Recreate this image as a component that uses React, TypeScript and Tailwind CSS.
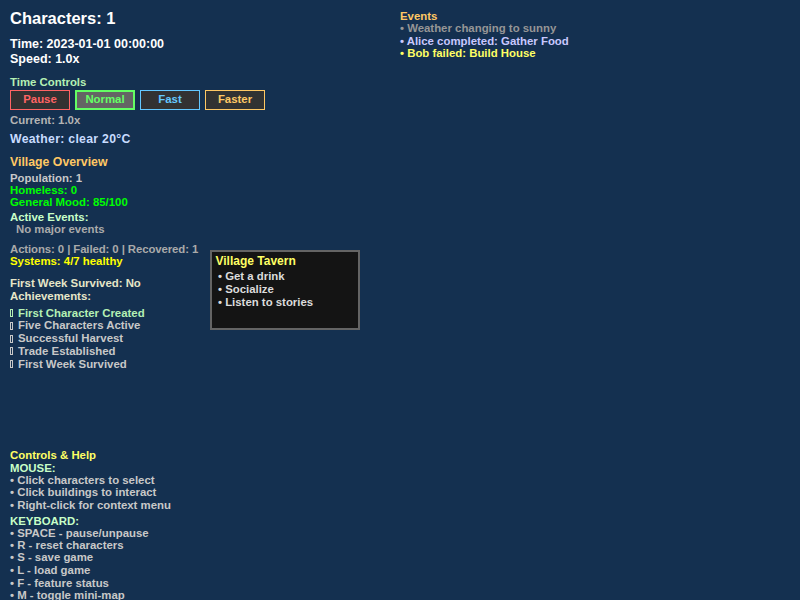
import React from "react";

const S = "h-[12px] leading-[12px] whitespace-pre";

function Ach({ text, color }: { text: string; color: string }) {
  return (
    <div className={`h-[12.75px] leading-[12.75px] whitespace-pre ${color}`}>
      <span className="inline-block w-[3px] h-[8px] border border-current align-[-0.5px] mr-[5px]" />
      {text}
    </div>
  );
}

export default function App() {
  return (
    <div
      className="relative w-[800px] h-[600px] overflow-hidden bg-[#143050] font-bold text-[11.4px]"
      style={{ fontFamily: '"Liberation Sans", Arial, sans-serif' }}
    >
      <div className="flex">
        {/* Left column */}
        <div className="w-[390px] pl-[10px] pt-[8px] flex flex-col">
          <div className="h-[20px] leading-[20px] text-[16.5px] text-white">Characters: 1</div>
          <div className="mt-[9px] h-[15px] leading-[15px] text-[12.5px] text-white">Time: 2023-01-01 00:00:00</div>
          <div className="h-[15px] leading-[15px] text-[12.5px] text-white">Speed: 1.0x</div>
          <div className={`mt-[9px] ${S} text-[#b4f0b4]`}>Time Controls</div>
          <div className="mt-[2px] flex gap-[5px]">
            <div className="w-[60px] h-[20px] flex items-center justify-center border border-[#ff6464] bg-[#323232] text-[#ff6464]">Pause</div>
            <div className="w-[60px] h-[20px] flex items-center justify-center border-2 border-[#64ff64] bg-[#646464] text-[#64ff64]">Normal</div>
            <div className="w-[60px] h-[20px] flex items-center justify-center border border-[#64c8ff] bg-[#323232] text-[#64c8ff]">Fast</div>
            <div className="w-[60px] h-[20px] flex items-center justify-center border border-[#ffc864] bg-[#323232] text-[#ffc864]">Faster</div>
          </div>
          <div className={`mt-[4px] ${S} text-[#b4b4b4]`}>Current: 1.0x</div>
          <div className="mt-[6px] h-[14px] leading-[14px] text-[12.25px] tracking-[0.3px] text-[#c8dcff]">Weather: clear 20°C</div>
          <div className="mt-[9px] h-[14px] leading-[14px] text-[12.3px] text-[#ffc864]">Village Overview</div>
          <div className={`mt-[3px] ${S} text-[#c8c8c8]`}>Population: 1</div>
          <div className={`${S} text-[#00ff00]`}>Homeless: 0</div>
          <div className={`${S} text-[#00ff00]`}>General Mood: 85/100</div>
          <div className={`mt-[3px] ${S} text-[#c8ffc8]`}>Active Events:</div>
          <div className={`${S} pl-[6px] text-[#aaaaaa]`}>No major events</div>
          <div className={`mt-[8px] ${S} tracking-[-0.1px] text-[#aaaaaa]`}>Actions: 0 | Failed: 0 | Recovered: 1</div>
          <div className={`${S} text-[#ffff00]`}>Systems: 4/7 healthy</div>
          <div className={`mt-[10px] ${S} text-[#e6e6c8]`}>First Week Survived: No</div>
          <div className={`mt-[1px] ${S} text-[#e6e6c8]`}>Achievements:</div>
          <div className="mt-[4.5px] flex flex-col">
            <Ach text="First Character Created" color="text-[#b4f0b4]" />
            <Ach text="Five Characters Active" color="text-[#c8c8c8]" />
            <Ach text="Successful Harvest" color="text-[#c8c8c8]" />
            <Ach text="Trade Established" color="text-[#c8c8c8]" />
            <Ach text="First Week Survived" color="text-[#c8c8c8]" />
          </div>
          <div className={`mt-[79px] ${S} text-[#ffff64]`}>Controls &amp; Help</div>
          <div className={`mt-[1px] ${S} text-[#c8ffc8]`}>MOUSE:</div>
          <div className={`${S} text-[#c8c8c8]`}>• Click characters to select</div>
          <div className={`${S} text-[#c8c8c8]`}>• Click buildings to interact</div>
          <div className={`mt-[1px] ${S} text-[#c8c8c8]`}>• Right-click for context menu</div>
          <div className={`mt-[4px] ${S} text-[#c8ffc8]`}>KEYBOARD:</div>
          <div className={`${S} text-[#c8c8c8]`}>• SPACE - pause/unpause</div>
          <div className={`${S} text-[#c8c8c8]`}>• R - reset characters</div>
          <div className={`${S} text-[#c8c8c8]`}>• S - save game</div>
          <div className={`mt-[1px] ${S} text-[#c8c8c8]`}>• L - load game</div>
          <div className={`mt-[1px] ${S} text-[#c8c8c8]`}>• F - feature status</div>
          <div className={`${S} text-[#c8c8c8]`}>• M - toggle mini-map</div>
        </div>

        {/* Right column: events */}
        <div className="pl-[10px] pt-[9.9px] flex flex-col">
          <div className="h-[12.4px] leading-[12.4px] text-[#ffc864]">Events</div>
          <div className="h-[12.4px] leading-[12.4px] whitespace-pre text-[#969696]">• Weather changing to sunny</div>
          <div className="h-[12.4px] leading-[12.4px] whitespace-pre text-[#c8c8ff]">• Alice completed: Gather Food</div>
          <div className="h-[12.4px] leading-[12.4px] whitespace-pre text-[#ffff64]">• Bob failed: Build House</div>
        </div>
      </div>

      {/* Tooltip overlay */}
      <div className="absolute left-[210px] top-[250px] w-[150px] h-[80px] border-2 border-[#646464] bg-[#141414] pt-[2px] pl-[3.5px]">
        <div className="h-[14px] leading-[14px] text-[12px] text-[#ffff64]">Village Tavern</div>
        <div className="mt-[2.4px] pl-[2.5px] flex flex-col text-[#dcdcdc]">
          <div className="h-[13px] leading-[13px] whitespace-pre">• Get a drink</div>
          <div className="h-[13px] leading-[13px] whitespace-pre">• Socialize</div>
          <div className="h-[13px] leading-[13px] whitespace-pre">• Listen to stories</div>
        </div>
      </div>
    </div>
  );
}
